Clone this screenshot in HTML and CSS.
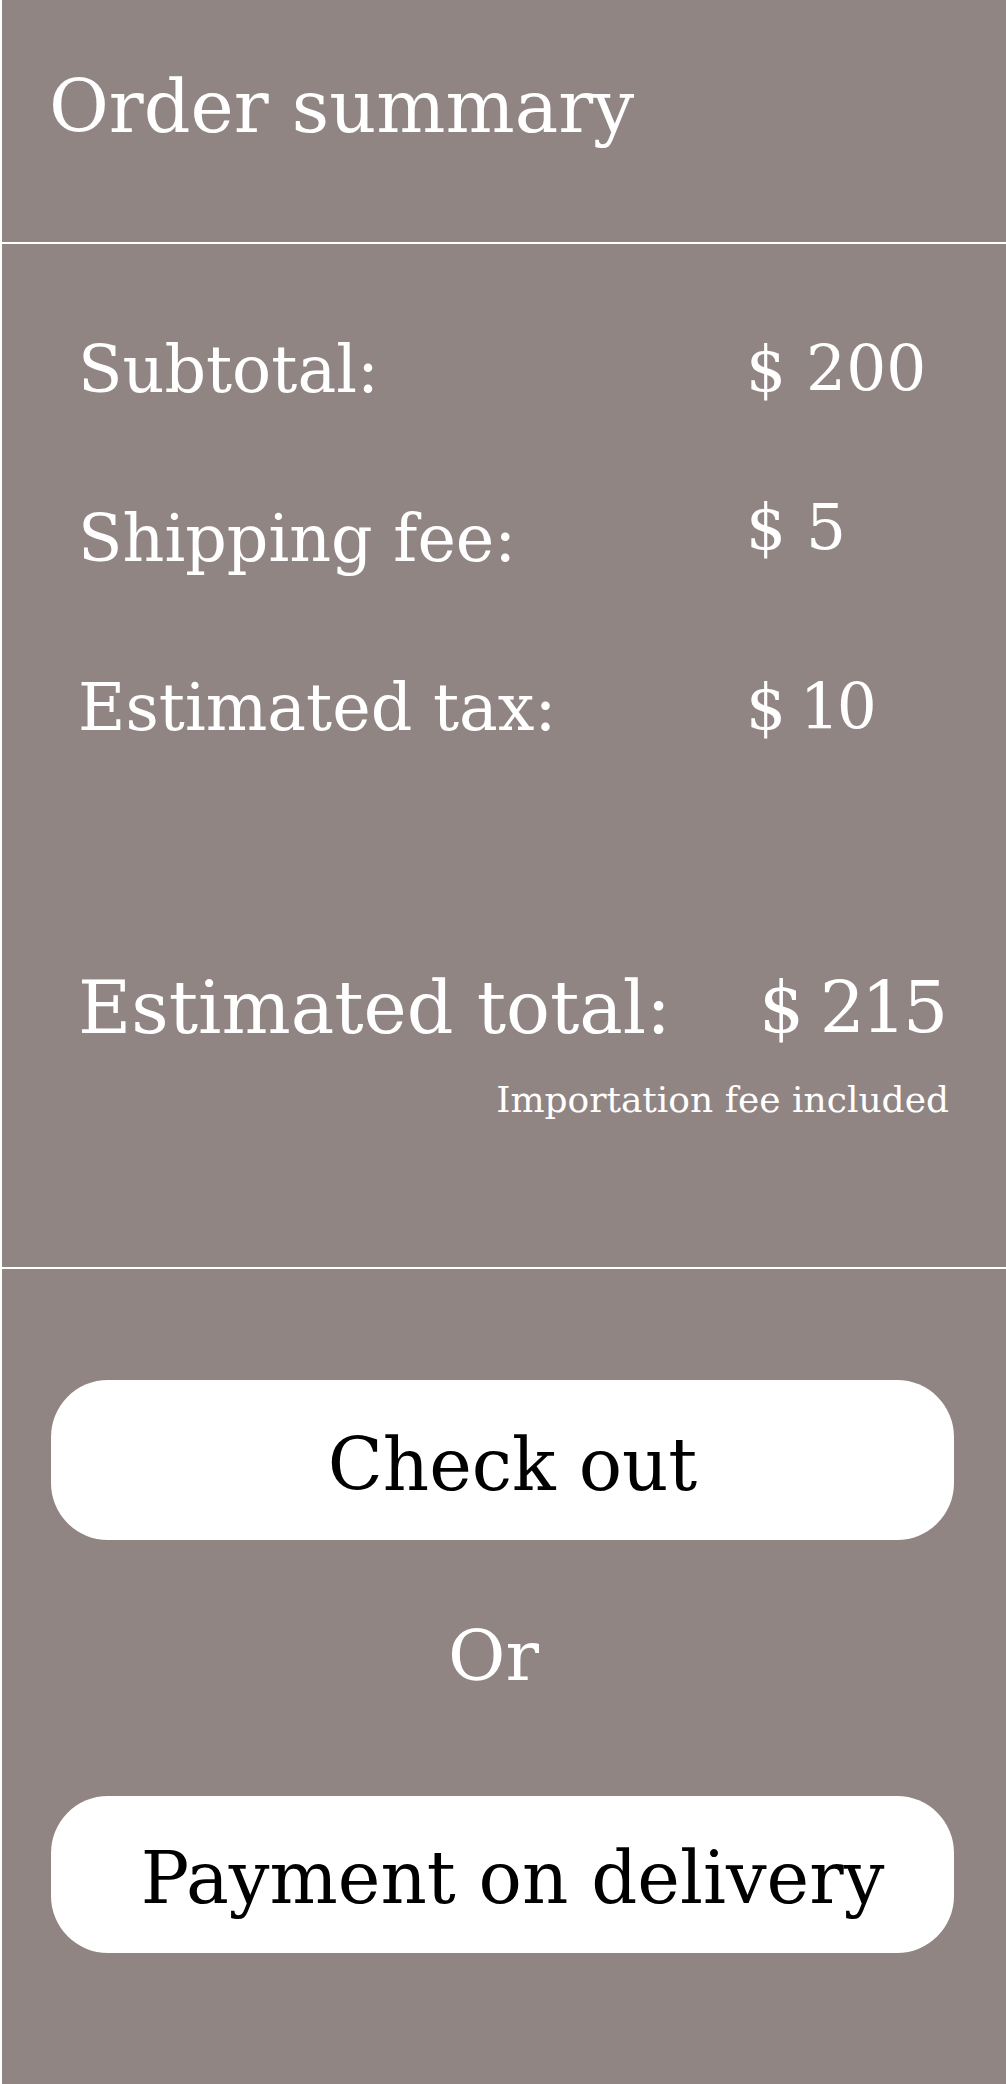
FILE: index.html
```html
<!DOCTYPE html>
<html lang="en">
<head>
<meta charset="utf-8">
<title>Order summary</title>
<link rel="stylesheet" href="styles.css">
</head>
<body>
<main class="summary">
  <section class="panel panel--head">
    <h1 class="title">Order summary</h1>
  </section>
  <section class="panel panel--lines">
    <div class="line"><span class="label">Subtotal:</span><span class="amount">$ 200</span></div>
    <div class="line line--raised"><span class="label">Shipping fee:</span><span class="amount">$ 5</span></div>
    <div class="line"><span class="label">Estimated tax:</span><span class="amount amount--narrow">$ 10</span></div>
    <div class="line line--total"><span class="label">Estimated total:</span><span class="amount amount--narrow">$ 215</span></div>
    <p class="note">Importation fee included</p>
  </section>
  <section class="panel panel--actions">
    <button class="btn" type="button">Check out</button>
    <p class="or">Or</p>
    <button class="btn btn--alt" type="button">Payment on delivery</button>
  </section>
</main>
</body>
</html>
```
FILE: styles.css
```css
html, body {
  margin: 0;
  padding: 0;
  background: #ffffff;
}

.summary {
  display: flex;
  flex-direction: column;
  gap: 2px;
  margin-left: 2px;
  min-height: 100vh;
  font-family: "DejaVu Serif", "Liberation Serif", serif;
  color: #ffffff;
}

.panel {
  background: #918584;
  box-sizing: border-box;
}

.panel--head {
  height: 242px;
  padding: 62px 0 0 47px;
}

.title {
  margin: 0;
  font-size: 73px;
  font-weight: 400;
  line-height: 89px;
}

.panel--lines {
  height: 1023px;
  padding: 88px 0 0 76px;
}

.line {
  display: grid;
  grid-template-columns: 668px auto;
  align-items: start;
  font-size: 63px;
  line-height: 76px;
  margin-bottom: 93px;
}

.line .label {
  font-size: 65px;
}

.line--raised .amount {
  margin-top: -11px;
}

.amount--narrow {
  letter-spacing: -0.05em;
}

.line--total {
  grid-template-columns: 681px auto;
  font-size: 71px;
  line-height: 85px;
  margin-top: 219px;
  margin-bottom: 0;
}

.line--total .label {
  font-size: 73px;
}

.note {
  margin: 28px 0 0;
  padding-right: 57px;
  font-size: 36px;
  line-height: 43px;
  text-align: right;
}

.panel--actions {
  flex: 1;
  display: flex;
  flex-direction: column;
  padding: 111px 52px 0 49px;
}

.btn {
  width: 100%;
  height: 160px;
  box-sizing: border-box;
  border: 0;
  border-radius: 57px;
  background: #ffffff;
  color: #000000;
  font-family: "DejaVu Serif", "Liberation Serif", serif;
  font-size: 72px;
  line-height: 150px;
  padding: 10px 0 0 20px;
  text-align: center;
}

.btn--alt {
  height: 157px;
  padding-top: 7px;
  margin-top: 98px;
}

.or {
  margin: 74px 0 0;
  padding-right: 18px;
  font-size: 70px;
  line-height: 84px;
  text-align: center;
}
```
